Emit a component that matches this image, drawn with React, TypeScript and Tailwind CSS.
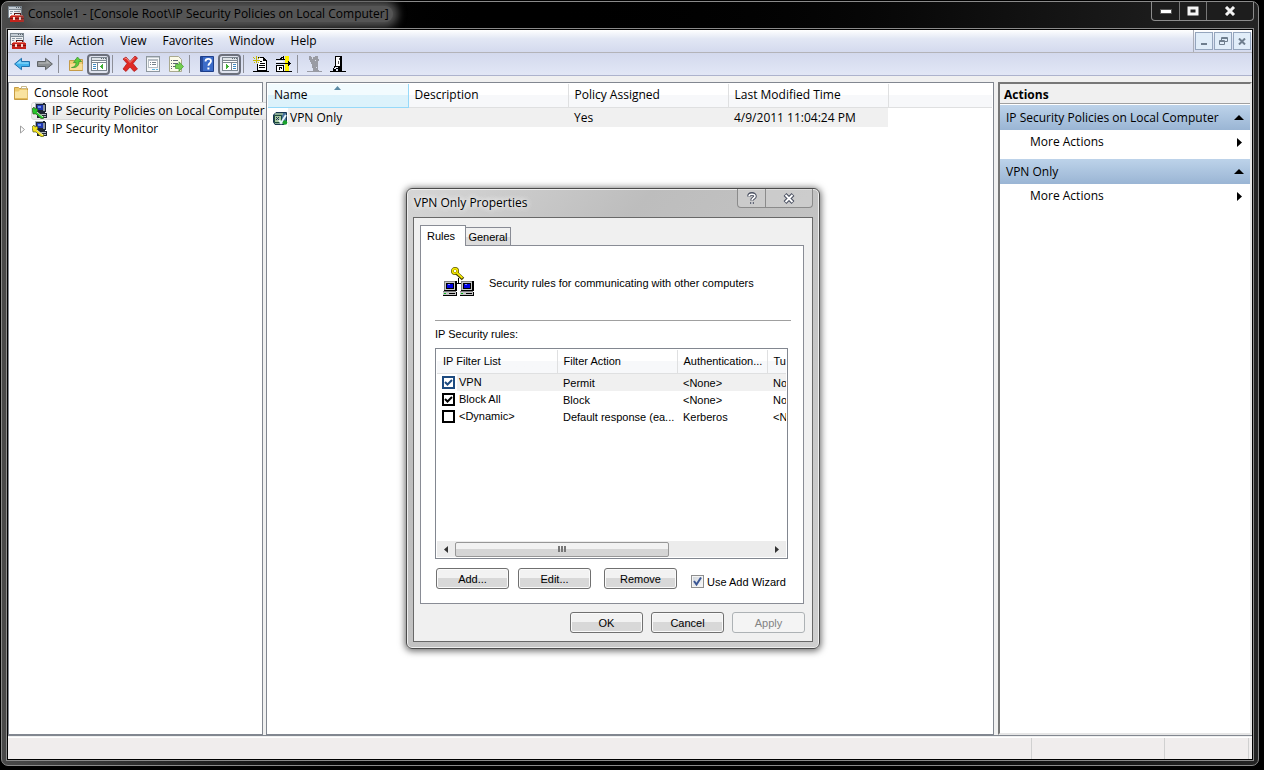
import type { ReactNode } from "react"
import clsx from "clsx"

const TREE_COLUMNS = ["Name", "Description", "Policy Assigned", "Last Modified Time"]

const MENUS = ["File", "Action", "View", "Favorites", "Window", "Help"]

const RULES = [
  { list: "VPN", action: "Permit", auth: "<None>", tunnel: "None", checked: true, selected: true },
  { list: "Block All", action: "Block", auth: "<None>", tunnel: "None", checked: true, selected: false },
  {
    list: "<Dynamic>",
    action: "Default response (ea...",
    auth: "Kerberos",
    tunnel: "<None>",
    checked: false,
    selected: false,
  },
]

type IconProps = { children: ReactNode; size?: number }

function Icon({ children, size = 16 }: IconProps) {
  return (
    <svg
      width={size}
      height={size}
      viewBox={`0 0 ${size} ${size}`}
      className="block shrink-0"
      aria-hidden="true"
    >
      {children}
    </svg>
  )
}

function ConsoleIcon() {
  return (
    <Icon>
      <g shapeRendering="crispEdges">
        <rect width="14" height="12" fill="#7c8791" />
        <rect x="1" y="1" width="12" height="2" fill="#c3ccd4" />
        <rect x="8" y="1" width="1" height="1" fill="#56616b" />
        <rect x="10" y="1" width="1" height="1" fill="#56616b" />
        <rect x="12" y="1" width="1" height="1" fill="#56616b" />
        <rect x="1" y="4" width="12" height="7" fill="#eef1f3" />
        <path d="M2 5h3v1H2zM2 7h2v1H2zM6 5h6v1H6z" fill="#8b98a5" />
        <path d="M6 7h7v2h-1V8H7v1H6z" fill="#5b1210" />
        <path d="M3 9h12v1h1v6H2v-6h1z" fill="#c5241c" />
        <path d="M3 9h12v1H3z" fill="#ed6d5e" />
        <path d="M2 12h14v1H2z" fill="#7d0f0c" />
        <path d="M5 11h2v3H5zM11 11h2v3h-2z" fill="#f5dad3" />
      </g>
    </Icon>
  )
}

function FolderIcon() {
  return (
    <Icon>
      <path d="M1.5 2.5h4l1 1h8v11h-13z" fill="#edc96a" stroke="#c69c43" />
      <path d="M8.500 1.500h5v2h-5z" fill="#fff" stroke="#c9b98a" />
      <path d="M2 6.500h3.500L7 5h7.500v9h-12.500z" fill="#f9e3a0" />
      <path d="M2 13h12.500v1H2z" fill="#e3ba58" />
    </Icon>
  )
}

function ComputerIcon({ tool }: { tool: string }) {
  return (
    <Icon>
      <g shapeRendering="crispEdges">
        <path d="M3 0h9l2 1v8l-2 1H5L3 8z" fill="#1c2431" />
        <path d="M3 0h8v1H4v7H3z" fill="#a9b3c2" />
        <path d="M5 2h6v5H5z" fill="#1d36b0" />
        <path d="M6 3h3v2H6z" fill="#6f8de8" />
        <path d="M11 2h2v6h-2z" fill="#8993a3" />
        <path d="M6 10h8l1 1v4H5v-3z" fill="#202632" />
        <path d="M7 11h7v1H7zM8 13h6v1H8z" fill="#b4bac4" />
      </g>
      <path d="M0 6l2-2 1 2 2-1 1 2-1 2 7 5-1 2-3-1-4-4H1z" fill={tool} stroke="#2d3a16" strokeWidth=".6" />
      <path d="M5 9l6 5" stroke="#fff" strokeWidth=".8" />
    </Icon>
  )
}

function PolicyIcon() {
  return (
    <Icon>
      <path d="M1.500 5L4 2.500h10.500V12L12 14.500H3L1.500 12z" fill="#46719c" stroke="#16354f" />
      <path d="M3 4h8M3 13h9" stroke="#c9e18d" />
      <path d="M2.500 5.500h7v7h-7z" fill="#a8c7a0" stroke="#1c4a3a" />
      <path d="M4 7l4 4M4 10l3-3" stroke="#1c3559" />
      <path d="M7 10l2 3 5-8" fill="none" stroke="#e6f6fb" strokeWidth="2" />
      <circle cx="13" cy="12.500" r="2.300" fill="#19a12c" />
    </Icon>
  )
}

function BackIcon() {
  return (
    <Icon>
      <path d="M.6 8L7.500 2.300V5.500h8v5h-8v3.200z" fill="#41b3ee" stroke="#2272ad" />
      <path d="M2.500 7.600L6.600 4.300v2.200h7.900v1.300z" fill="#92dcfa" />
    </Icon>
  )
}

function ForwardIcon() {
  return (
    <Icon>
      <path d="M15.400 8L8.500 2.300V5.500h-8v5h8v3.200z" fill="#8b8e90" stroke="#606467" />
      <path d="M13.500 7.600L9.400 4.300v2.200H1.500v1.300z" fill="#b3b5b6" />
    </Icon>
  )
}

function UpFolderIcon() {
  return (
    <Icon>
      <path d="M1.500 4.500h5l1-1h7v11h-13z" fill="#efcb73" stroke="#c59b48" />
      <path d="M2 8h12.500v6H2z" fill="#f8dd94" />
      <path d="M3.500 11.500C7 11 8 9 8 6.500H5.500L9.500 1l4 4.500h-2.500c0 4-2 6.500-7.500 6z" fill="#5fcc3b" stroke="#30912a" strokeWidth=".7" />
    </Icon>
  )
}

function PaneIcon({ side }: { side: "left" | "right" }) {
  return (
    <Icon>
      <g shapeRendering="crispEdges">
        <path d="M0 1h16v14H0z" fill="#7d8790" />
        <path d="M1 2h14v2H1z" fill="#dfe4e8" />
        <path d="M10 2h1v1h-1zM12 2h1v1h-1zM14 2h1v1h-1z" fill="#606a73" />
        <path d="M1 5h14v1H1zM1 7h14v7H1z" fill="#fff" />
        {side === "left" ? (
          <>
            <path d="M2 8h3v1H2zM2 10h3v1H2zM2 12h3v1H2z" fill="#3c8ac4" />
            <path d="M6 7h1v7H6z" fill="#7d8790" />
            <path d="M12 8v5h-1v-1h-1v-1H9v-1h1V9h1V8z" fill="#3fae35" />
          </>
        ) : (
          <>
            <path d="M11 8h3v1h-3zM11 10h3v1h-3zM11 12h3v1h-3z" fill="#3c8ac4" />
            <path d="M9 7h1v7H9z" fill="#7d8790" />
            <path d="M4 8v5h1v-1h1v-1h1v-1H6V9H5V8z" fill="#3fae35" />
          </>
        )}
      </g>
    </Icon>
  )
}

function DeleteIcon() {
  return (
    <Icon>
      <path d="M1 3l3-2 4 4.500L13 0l2.500 2-4.500 5.500 4.500 5.500-3.500 2.500L8 11l-4 4.500L1 13l4-5.500z" fill="#df2a25" stroke="#ac1613" strokeWidth=".7" />
      <path d="M2.500 3L4 2l4 4.500L12.800 1.500" fill="none" stroke="#f58b7f" />
    </Icon>
  )
}

function PropertiesIcon() {
  return (
    <Icon>
      <g shapeRendering="crispEdges">
        <path d="M1 0h14v16H1z" fill="#8e979e" />
        <path d="M2 1h12v14H2z" fill="#f5f7f8" />
        <path d="M2 1h12v1H2z" fill="#c7ced4" />
        <path d="M3 3h10v9H3z" fill="#b5bdc4" />
        <path d="M4 5h8v6H4z" fill="#fff" />
        <path d="M5 6h1v1H5zM7 6h4v1H7zM5 8h1v1H5zM7 8h4v1H7z" fill="#78838c" />
        <path d="M7 13h3v1H7zM11 13h2v1h-2z" fill="#58b7e4" />
      </g>
    </Icon>
  )
}

function ExportIcon() {
  return (
    <Icon>
      <path d="M1.500.5h9l3 3v12h-12z" fill="#fbfbe9" stroke="#a9a98f" />
      <path d="M3 4.500h1M5 4.500h5M3 7.500h1M5 7.500h5M3 10.500h1M5 10.500h3M3 12.500h1" stroke="#5d6570" />
      <path d="M7.500 8.500h3.500V5.800l4.500 4.700-4.500 4.700v-2.700H7.500z" fill="#72ce4e" stroke="#409c2c" strokeWidth=".7" />
    </Icon>
  )
}

function HelpIcon() {
  return (
    <Icon>
      <path d="M1.500.5h13v15h-13z" fill="#3c6cc9" stroke="#1e3f8a" />
      <path d="M2 1h2v14H2z" fill="#274b9c" />
      <path d="M6.500 5.500C6.500 2 12 2.200 12 5.300c0 2-2.600 2-2.600 4.500" fill="none" stroke="#fff" strokeWidth="1.800" />
      <path d="M8.400 11.500h2v2h-2z" fill="#fff" />
    </Icon>
  )
}

function NewPolicyIcon() {
  return (
    <Icon>
      <g shapeRendering="crispEdges">
        <path d="M5 1h6v1h1v1h1v1h1v11H4V8h1v6h8V5h-3V2H5z" fill="#000" />
        <path d="M6 2h4v3h3v9H5V7h1z" fill="#fff" />
        <path d="M7 5h2v1H7zM7 7h5v1H7zM6 9h6v1H6zM6 11h6v1H6zM0 15h16v1H0z" fill="#000" />
        <path d="M0 1h1v1H0zM1 2h1v1H1zM3 0h1v3H3zM6 1h1v1H6zM5 2h1v1H5zM0 4h7v1H0zM3 3h1v4H3zM1 6h1v1H1zM5 6h1v1H5z" fill="#c7ba00" />
      </g>
    </Icon>
  )
}

function ManageFiltersIcon() {
  return (
    <Icon>
      <g shapeRendering="crispEdges">
        <path d="M9 0h4v15H9z" fill="#fff200" />
        <path d="M7 0h1v4H7zM5 1h2v1H5zM4 2h2v1H4zM0 3h9v1H0zM0 7h15v1H0zM12 5h1v5h-1zM13 6h1v3h-1zM0 9h8v1H0zM0 10h1v5H0zM7 10h1v5H7zM0 15h16v1H0z" fill="#000" />
        <path d="M1 10h6v5H1zM0 5h7v1H0z" fill="#fff" />
        <path d="M3 11h3v1H3zM5 12h1v1H5zM3 12h1v2H3z" fill="#000" />
      </g>
    </Icon>
  )
}

function UnassignIcon() {
  return (
    <Icon>
      <g shapeRendering="crispEdges">
        <path d="M2 0h2v1h4V0h3v3h1v2h-1v9h1v1H6v-3H5V8H4V6H3V4H2z" fill="#999ba3" />
        <path d="M5 1h1v2H5zM8 4h1v1H8zM9 11h1v1H9z" fill="#d9ddea" />
        <path d="M0 15h15v1H0z" fill="#999ba3" />
      </g>
    </Icon>
  )
}

function AssignIcon() {
  return (
    <Icon>
      <g shapeRendering="crispEdges">
        <path d="M5 0h7v15H8v-2h1v-1H5z" fill="#000" />
        <path d="M6 1h4v9H6z" fill="#fff" />
        <path d="M9 2h1v2H9zM8 5h1v3H8z" fill="#555" />
        <path d="M4 10h5v3H6v2H3v-3h1z" fill="#000" />
        <path d="M4 12h2v1H4zM5 11h3v1H5z" fill="#e4e8f2" />
        <path d="M0 15h16v1H0z" fill="#000" />
      </g>
    </Icon>
  )
}

function SmallPc({ x }: { x: number }) {
  return (
    <g transform={`translate(${x} 14)`}>
      <path d="M1 0h12l1 1v9H1z" fill="#000" />
      <path d="M1 0h11v1H2v8H1z" fill="#808080" />
      <path d="M2 1h10v8H2z" fill="#c6c6c6" />
      <path d="M3 2h8v6H3z" fill="#000" />
      <path d="M4 3h6v4H4z" fill="#0000e0" />
      <path d="M5 3h2v1H5z" fill="#7d8cff" />
      <path d="M0 11h14v4H0z" fill="#000" />
      <path d="M0 10h13v4H0z" fill="#c6c6c6" />
      <path d="M1 12h2v1H1z" fill="#00b515" />
      <path d="M6 12h6v1H6z" fill="#000" />
      <path d="M0 10h13v1H0z" fill="#808080" />
    </g>
  )
}

function SecureLinkIcon() {
  return (
    <Icon size={32}>
      <g shapeRendering="crispEdges">
        <SmallPc x={0} />
        <SmallPc x={17} />
        <path d="M15 11h1v5h-1zM14 16h4v1h-4z" fill="#000" />
      </g>
      <circle cx="12" cy="4" r="2.600" fill="#fff" stroke="#5f5700" strokeWidth="2.800" />
      <circle cx="12" cy="4" r="2.400" fill="none" stroke="#f4e800" strokeWidth="1.600" />
      <path d="M13.500 6L20 12" stroke="#403b00" strokeWidth="3.600" />
      <path d="M13.500 5.500L19.500 11" stroke="#f4e800" strokeWidth="1.800" />
    </Icon>
  )
}

function ToolButton({ label, pressed, children }: { label: string; pressed?: boolean; children: ReactNode }) {
  return (
    <button
      type="button"
      aria-label={label}
      className={clsx(
        "flex h-[21px] w-[23px] items-center justify-center",
        pressed && "rounded-[4px] border-2 border-[#6c707c] bg-[#dfe3ee]",
      )}
    >
      {children}
    </button>
  )
}

function ToolSeparator() {
  return (
    <div className="w-2 pl-0.5">
      <div className="h-[18px] w-px bg-[#8d8f98]" />
    </div>
  )
}

function TitleBar() {
  return (
    <header className="flex h-[26px] items-start justify-between">
      <div className="flex items-center gap-1 pt-1 pl-0.5">
        <ConsoleIcon />
        <h1 className="rounded-lg bg-[#555] pr-1 leading-[16px] text-black shadow-[0_0_9px_5px_#555]">
          Console1 - [Console Root\IP Security Policies on Local Computer]
        </h1>
      </div>
      <div className="flex h-[19px] rounded-b-[4px] border border-t-0 border-[#8c8c8c] bg-[#1d1d1d]">
        <button type="button" aria-label="Minimize" className="flex w-[28px] items-center justify-center border-r border-[#777]">
          <svg width="12" height="5" aria-hidden="true">
            <path d="M.5.5h11v4H.5z" fill="#fff" stroke="#555" />
          </svg>
        </button>
        <button type="button" aria-label="Maximize" className="flex w-[27px] items-center justify-center border-r border-[#777]">
          <svg width="12" height="10" aria-hidden="true">
            <path d="M2 2h8v6H2z" fill="#222" stroke="#f4f4f4" strokeWidth="3" />
          </svg>
        </button>
        <button type="button" aria-label="Close" className="flex w-[46px] items-center justify-center">
          <svg width="12" height="10" aria-hidden="true">
            <path d="M2 1l8 8M10 1L2 9" stroke="#f4f4f4" strokeWidth="3" />
          </svg>
        </button>
      </div>
    </header>
  )
}

function MenuBar() {
  return (
    <div className="flex h-[23px] items-stretch border-b border-[#b3b3b8] bg-linear-to-b from-white via-[#e2e7f4] via-40% to-[#d4daee]">
      <div className="flex items-center pl-0.5">
        <ConsoleIcon />
      </div>
      <nav aria-label="Menu" className="flex">
        {MENUS.map((menu) => (
          <button key={menu} type="button" className="px-2">
            {menu}
          </button>
        ))}
      </nav>
      <div className="ml-auto flex items-center gap-px border-l border-[#a9adb8] pr-px pl-px text-[#6f7e8e]">
        <button type="button" aria-label="Minimize child" className="flex h-[18px] w-[18px] items-end justify-center border border-[#94a5bd] bg-[#e1edf9] pb-1">
          <span className="h-0.5 w-1.5 bg-[#6f7e8e]" />
        </button>
        <button type="button" aria-label="Restore child" className="flex h-[18px] w-[18px] items-center justify-center border border-[#94a5bd] bg-[#e1edf9]">
          <svg width="9" height="8" fill="none" stroke="currentColor" aria-hidden="true">
            <path d="M2.500 3V.5h6v4H6M2 1.500h6M.5 3.500h5v4h-5zM0 4.500h6" />
          </svg>
        </button>
        <button type="button" aria-label="Close child" className="flex h-[18px] w-[18px] items-center justify-center border border-[#94a5bd] bg-[#e1edf9]">
          <svg width="8" height="7" stroke="currentColor" strokeWidth="2" aria-hidden="true">
            <path d="M1 .5l6 6M7 .5l-6 6" />
          </svg>
        </button>
      </div>
    </div>
  )
}

function Toolbar() {
  return (
    <div className="flex h-[23px] items-center border-b border-[#adb3cd] bg-linear-to-b from-[#d3d9ed] to-[#e2e7f6] pl-0.5">
      <ToolButton label="Back"><BackIcon /></ToolButton>
      <ToolButton label="Forward"><ForwardIcon /></ToolButton>
      <ToolSeparator />
      <ToolButton label="Up one level"><UpFolderIcon /></ToolButton>
      <ToolButton label="Show console tree" pressed><PaneIcon side="left" /></ToolButton>
      <ToolSeparator />
      <ToolButton label="Delete"><DeleteIcon /></ToolButton>
      <ToolButton label="Properties"><PropertiesIcon /></ToolButton>
      <ToolButton label="Export list"><ExportIcon /></ToolButton>
      <ToolSeparator />
      <ToolButton label="Help"><HelpIcon /></ToolButton>
      <ToolButton label="Show action pane" pressed><PaneIcon side="right" /></ToolButton>
      <ToolSeparator />
      <ToolButton label="Create policy"><NewPolicyIcon /></ToolButton>
      <ToolButton label="Manage filters"><ManageFiltersIcon /></ToolButton>
      <ToolSeparator />
      <ToolButton label="Assign"><UnassignIcon /></ToolButton>
      <ToolButton label="Unassign"><AssignIcon /></ToolButton>
    </div>
  )
}

function ConsoleTree() {
  return (
    <nav aria-label="Console tree" className="w-[255px] shrink-0 border border-[#828790] bg-white pt-px">
      <ul>
        <li className="flex h-[18px] items-center gap-1 pl-1">
          <FolderIcon />
          <span className="pl-px">Console Root</span>
        </li>
        <li className="flex pl-[22px]">
          <button type="button" className="flex h-[18px] items-center gap-1 rounded-[3px] border border-[#d9d9d9] bg-linear-to-b from-[#f9f9f9] to-[#e8e8e8] pr-1 whitespace-nowrap">
            <ComputerIcon tool="#27c52b" />
            IP Security Policies on Local Computer
          </button>
        </li>
        <li className="flex h-[18px] items-center pl-2.5">
          <svg width="13" height="9" className="shrink-0" aria-hidden="true">
            <path d="M1.500 1v7L5.500 4.500z" fill="#fff" stroke="#a0a0a0" />
          </svg>
          <button type="button" className="flex items-center gap-1">
            <ComputerIcon tool="#f3e21b" />
            IP Security Monitor
          </button>
        </li>
      </ul>
    </nav>
  )
}

function PolicyList() {
  return (
    <main className="min-w-0 flex-1 border border-[#828790] bg-white p-px">
      <table className="w-full table-fixed border-collapse">
        <colgroup>
          <col className="w-[140px]" />
          <col className="w-[160px]" />
          <col className="w-[160px]" />
          <col className="w-[160px]" />
          <col />
        </colgroup>
        <thead>
          <tr className="h-[23px]">
            {TREE_COLUMNS.map((column, index) => (
              <th
                key={column}
                scope="col"
                className={clsx(
                  "relative border-r border-b p-0 pl-1.5 text-left font-normal",
                  index === 0
                    ? "border-[#96d9f9] bg-linear-to-b from-[#f2fbfe] from-50% to-[#dcf2fb] to-50%"
                    : "border-[#dfe0e1] bg-linear-to-b from-white from-50% to-[#f7f8fa] to-50%",
                )}
              >
                {column}
                {index === 0 && (
                  <svg width="7" height="4" className="absolute top-0.5 left-[66px]" aria-hidden="true">
                    <path d="M0 4l3.500-4L7 4z" fill="#5c8ba5" />
                  </svg>
                )}
              </th>
            ))}
            <td className="border-b border-[#dfe0e1] bg-linear-to-b from-white from-50% to-[#f7f8fa] to-50% p-0" />
          </tr>
        </thead>
        <tbody>
          <tr className="h-px">
            <td colSpan={5} className="p-0" />
          </tr>
          <tr className="h-[19px]">
            <td className="p-0 pl-1">
              <div className="flex items-center">
                <PolicyIcon />
                <span className="flex-1 bg-[#f0f0f0] pl-0.5 leading-[19px]">VPN Only</span>
              </div>
            </td>
            <td className="bg-[#f0f0f0] p-0" />
            <td className="bg-[#f0f0f0] p-0 pl-1.5">Yes</td>
            <td className="bg-[#f0f0f0] p-0 pl-1.5">4/9/2011 11:04:24 PM</td>
            <td className="p-0" />
          </tr>
        </tbody>
      </table>
    </main>
  )
}

function ActionGroup({ title }: { title: string }) {
  return (
    <section>
      <h3>
        <button type="button" className="flex h-[25px] w-full items-center justify-between bg-linear-to-b from-[#bdd3ea] to-[#9ab5d4] pr-1.5 pl-1.5">
          {title}
          <svg width="10" height="5" aria-hidden="true">
            <path d="M0 5l5-5 5 5z" />
          </svg>
        </button>
      </h3>
      <button type="button" className="flex h-[24px] w-full items-center justify-between pr-2 pl-[30px]">
        More Actions
        <svg width="5" height="9" aria-hidden="true">
          <path d="M0 0l5 4.500L0 9z" />
        </svg>
      </button>
    </section>
  )
}

function ActionsPane() {
  return (
    <aside className="w-[254px] shrink-0 border-2 border-t-[#777] border-r-[#e6e6e6] border-b-[#e6e6e6] border-l-[#777] bg-white">
      <h2 className="mb-px h-[20px] border-b border-[#a0a0a0] bg-[#f0f0f0] pt-px pl-1 leading-[20px] font-bold">
        Actions
      </h2>
      <div className="flex flex-col gap-[5px]">
        <ActionGroup title="IP Security Policies on Local Computer" />
        <ActionGroup title="VPN Only" />
      </div>
    </aside>
  )
}

function DialogButton({ children, disabled }: { children: ReactNode; disabled?: boolean }) {
  return (
    <button
      type="button"
      disabled={disabled}
      className={clsx(
        "h-[21px] w-[73px] rounded-[3px] border",
        disabled
          ? "border-[#adb2b5] bg-[#f4f4f4] text-[#838383]"
          : "border-[#707070] bg-linear-to-b from-[#f2f2f2] from-50% to-[#d8d8d8] to-50% shadow-[inset_0_0_0_1px_#fafafa]",
      )}
    >
      {children}
    </button>
  )
}

function RuleRow({ rule }: { rule: (typeof RULES)[number] }) {
  const cell = clsx("overflow-hidden p-0 pl-1.5 whitespace-nowrap", rule.selected && "bg-[#f0f0f0]")
  const box = rule.selected ? "border-[#1c4a80]" : "border-black"
  return (
    <tr className="h-[17px]">
      <td className="p-0 pl-[5px]">
        <label className="relative flex items-center gap-0.5">
          <input
            type="checkbox"
            defaultChecked={rule.checked}
            className={clsx("peer size-[13px] shrink-0 appearance-none border-2 bg-white", box)}
          />
          <svg
            width="13"
            height="13"
            fill="none"
            stroke={rule.selected ? "#1c4a80" : "#000"}
            strokeWidth="2"
            className="pointer-events-none absolute left-0 hidden peer-checked:block"
            aria-hidden="true"
          >
            <path d="M3 6l2.500 2.500L10 4" />
          </svg>
          <span className={clsx("flex-1 pl-0.5 leading-[17px]", rule.selected && "bg-[#f0f0f0]")}>{rule.list}</span>
        </label>
      </td>
      <td className={cell}>{rule.action}</td>
      <td className={cell}>{rule.auth}</td>
      <td className={cell}>{rule.tunnel}</td>
    </tr>
  )
}

function RuleTable() {
  return (
    <div className="mr-[3px] flex h-[211px] flex-col border border-[#828790] p-px">
      <table className="w-full table-fixed border-collapse">
        <colgroup>
          <col className="w-[120px]" />
          <col className="w-[120px]" />
          <col className="w-[90px]" />
          <col />
        </colgroup>
        <thead>
          <tr className="h-[23px]">
            {["IP Filter List", "Filter Action", "Authentication...", "Tunnel Endpoint"].map((column) => (
              <th
                key={column}
                scope="col"
                className="overflow-hidden border-r border-b border-[#dfe0e1] bg-linear-to-b from-white from-50% to-[#f7f8fa] to-50% p-0 pl-1.5 text-left font-normal whitespace-nowrap last:border-r-0"
              >
                {column}
              </th>
            ))}
          </tr>
        </thead>
        <tbody>
          <tr className="h-px">
            <td colSpan={4} className="p-0" />
          </tr>
          {RULES.map((rule) => (
            <RuleRow key={rule.list} rule={rule} />
          ))}
        </tbody>
      </table>
      <div className="mt-auto flex h-[16px] items-center bg-[#ececec]">
        <button type="button" aria-label="Scroll left" className="flex w-[18px] justify-center">
          <svg width="4" height="7" aria-hidden="true">
            <path d="M4 0v7L0 3.500z" fill="#333" />
          </svg>
        </button>
        <div className="flex h-[15px] w-[214px] items-center justify-center gap-px rounded-[2px] border border-[#979797] bg-linear-to-b from-[#f2f2f2] from-50% to-[#d5d5d5] to-50%">
          <span className="h-[6px] w-0.5 bg-[#777]" />
          <span className="h-[6px] w-0.5 bg-[#777]" />
          <span className="h-[6px] w-0.5 bg-[#777]" />
        </div>
        <button type="button" aria-label="Scroll right" className="ml-auto flex w-[18px] justify-center">
          <svg width="4" height="7" aria-hidden="true">
            <path d="M0 0v7l4-3.500z" fill="#333" />
          </svg>
        </button>
      </div>
    </div>
  )
}

function PropertiesDialog() {
  return (
    <div
      role="dialog"
      aria-labelledby="dialog-title"
      className="absolute top-[188px] left-[406px] w-[414px] rounded-[6px] border border-[#4b4b4b] bg-linear-to-br from-[#d6d6d6] via-[#bdbdbd] via-30% to-[#cfcfcf] px-1.5 pb-1.5 shadow-[inset_0_0_0_1px_#eee,0_1px_7px_1px_rgba(0,0,0,0.6)]"
    >
      <div className="flex h-[28px] items-start justify-between">
        <h2 id="dialog-title" className="pl-px leading-[27px] [text-shadow:0_0_6px_#fff,0_0_6px_#fff]">
          VPN Only Properties
        </h2>
        <div className="flex h-[19px] rounded-b-[4px] border border-t-0 border-[#8b8b8b] bg-[#d2d2d2]/60">
          <button type="button" aria-label="Help" className="flex w-[28px] items-center justify-center border-r border-[#8b8b8b]">
            <svg width="10" height="13" fill="none" aria-hidden="true">
              <path d="M2 4.500C2 1 8 1 8 4.200 8 6 5 6 5 8.500M5 10v2" stroke="#4b5162" strokeWidth="3.600" />
              <path d="M2 4.300C2 1.500 8 1.500 8 4.200 8 6 5 6 5 8.300M5 10.300v1.500" stroke="#fff" strokeWidth="1.600" />
            </svg>
          </button>
          <button type="button" aria-label="Close" className="flex w-[46px] items-center justify-center">
            <svg width="12" height="11" aria-hidden="true">
              <path d="M2 1.500l8 8M10 1.500l-8 8" stroke="#4b5162" strokeWidth="4" />
              <path d="M2.500 2l7 7M9.500 2l-7 7" stroke="#fff" strokeWidth="1.800" />
            </svg>
          </button>
        </div>
      </div>
      <div className="border border-[#686868] bg-[#f0f0f0] pt-[7px] pr-2 pb-2 pl-1.5 font-['Liberation_Sans',Arial,sans-serif] text-[11px]">
        <div role="tablist" className="flex items-end">
          <button type="button" role="tab" aria-selected="true" className="relative -mb-px h-[21px] w-[46px] border border-b-0 border-[#898c95] bg-white pr-1">
            Rules
          </button>
          <button type="button" role="tab" aria-selected="false" className="h-[18px] w-[45px] border border-b-0 border-l-0 border-[#898c95] bg-linear-to-b from-[#f2f2f2] from-50% to-[#dcdcdc] to-50%">
            General
          </button>
        </div>
        <div role="tabpanel" className="border border-[#898c95] bg-white pr-3 pb-3.5 pl-3.5">
          <div className="flex h-[74px] items-center gap-3.5 pl-2">
            <SecureLinkIcon />
            <p>Security rules for communicating with other computers</p>
          </div>
          <hr className="border-t border-[#a0a0a0]" />
          <p className="leading-[27px]">IP Security rules:</p>
          <RuleTable />
          <div className="mt-[9px] flex h-[21px] pl-px">
            <DialogButton>Add...</DialogButton>
            <div className="flex pr-[13px] pl-[9px]">
              <DialogButton>Edit...</DialogButton>
            </div>
            <DialogButton>Remove</DialogButton>
            <label className="relative flex items-center gap-[3px] pt-1.5 pl-3.5">
              <input type="checkbox" defaultChecked className="size-[13px] appearance-none border border-[#8e8f8f] bg-linear-to-br from-[#cfd4da] to-[#fbfbfb] shadow-[inset_0_0_0_1px_#f4f4f4]" />
              <svg width="13" height="13" fill="none" stroke="#3b5795" strokeWidth="2" className="pointer-events-none absolute left-3.5" aria-hidden="true">
                <path d="M3 6l2.500 3.500L10 2.500" />
              </svg>
              Use Add Wizard
            </label>
          </div>
        </div>
        <div className="-mr-px mt-2 flex justify-end gap-2">
          <DialogButton>OK</DialogButton>
          <DialogButton>Cancel</DialogButton>
          <DialogButton disabled>Apply</DialogButton>
        </div>
      </div>
    </div>
  )
}

function StatusBar() {
  return (
    <footer className="mt-px flex h-[22px] justify-end border-t border-white bg-[#f0eded] pr-[3px]">
      <div className="w-[133px] border-l border-[#d0d0d0]" />
      <div className="w-[85px] border-x border-[#d0d0d0]" />
    </footer>
  )
}

export default function App() {
  return (
    <div className="relative h-screen overflow-hidden bg-black pt-px pr-[5px] pb-1 pl-px font-['Open_Sans','Segoe_UI',sans-serif] text-[12px] leading-[16px] text-black">
      <div className="flex h-full flex-col rounded-[7px] border border-[#8a8a8a] bg-linear-to-r from-[#4a4a4a] via-black via-40% to-[#242424] px-1 pb-1">
        <TitleBar />
        <div className="flex min-h-0 flex-1 flex-col border border-[#8a8a8a]">
          <div className="flex min-h-0 flex-1 flex-col border border-black bg-[#f0f0f0]">
            <MenuBar />
            <Toolbar />
            <div className="flex min-h-0 flex-1 border-b border-[#828790] pt-1.5">
              <ConsoleTree />
              <div className="ml-[3px] flex min-w-0 flex-1 gap-1">
                <PolicyList />
                <ActionsPane />
              </div>
            </div>
            <StatusBar />
          </div>
        </div>
      </div>
      <PropertiesDialog />
    </div>
  )
}
